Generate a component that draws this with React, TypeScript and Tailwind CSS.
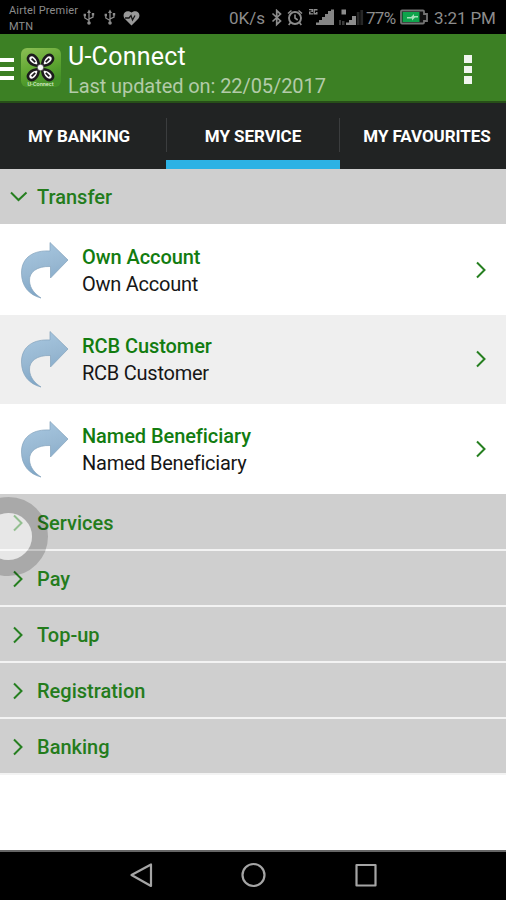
import React from "react";

const FONT = "font-['Roboto','Liberation_Sans',sans-serif]";

function Usb() {
  return (
    <svg className="block h-[17px] w-[12px]" viewBox="0 0 12 17" fill="none" stroke="#8c8c8c" strokeWidth="1.3">
      <path d="M6 3v10M6 11.5L1.8 9V6M6 10l4-2V5.5" />
      <path d="M6 .5L4 4h4z" fill="#8c8c8c" stroke="none" />
      <circle cx="6" cy="14" r="1.8" fill="#8c8c8c" stroke="none" />
      <path d="M.6 4.8H3v2.4H.6zM8.8 4h2.4v2.4H8.8z" fill="#8c8c8c" stroke="none" />
    </svg>
  );
}

function StatusBar() {
  return (
    <div className="flex h-[34px] shrink-0 items-start bg-black text-[#8c8c8c]">
      <div className="ml-[9px] mt-[3px] w-[74px] whitespace-nowrap text-[11px] leading-[15.5px] tracking-[0.15px]">
        <div>Airtel Premier</div>
        <div>MTN</div>
      </div>
      <div className="mt-[9px] flex items-start">
        <Usb />
        <div className="ml-[9px]"><Usb /></div>
        <svg className="ml-[7px] mt-px block h-[16px] w-[17px]" viewBox="0 0 17 16">
          <path d="M8.5 15.5L2 9C-2 4.500 3-1.500 8.500 2.600 14-1.500 19 4.500 15 9z" fill="#999" />
          <path d="M2 8h4l2-2.500L9.500 10 12 5.500" fill="none" stroke="#151515" strokeWidth="1.300" />
        </svg>
      </div>
      <span className="ml-[89px] mt-[8px] w-[41px] whitespace-nowrap text-[17px] leading-[20px]">0K/s</span>
      <svg className="mt-[9px] block h-[18px] w-[97px] shrink-0" viewBox="269 9 97 18" fill="none" stroke="#8c8c8c">
        <path d="M271.500 13.500L279.500 21 275.700 24.500V10.500L279.500 14 271.500 21.500" strokeWidth="1.700" />
        <circle cx="294" cy="18" r="6" strokeWidth="1.900" />
        <path d="M294 14.500V18l2.700 2M287 13.500l3.500-3M297.500 10.500l3.500 3M289.500 22.500L287.700 25M298.500 22.500l1.800 2.500" strokeWidth="1.600" />
        <g fill="#8c8c8c" stroke="none">
          <path d="M308 9h4v3h-2.500v1.200h2.500v1.300h-4v-3h2.500v-1.200h-2.500zM312.500 9h4v1.400h-2.600V13h1v-1h1.600v2.500h-4z" />
          <path d="M315 25v-2.500h3V20h3v-3h3v-3h3v-3h3V9.500h3V25z" fill="#858585" />
          <path d="M340.500 9.500h4.500v5h-4.500zM345 25v-2.500h3V20h3v-4h4v9z" />
          <path d="M338 20h2v5h-2zM341 21h2.500v4H341z" fill="#3a3a3a" />
          <path d="M355.800 12h2.700v13h-2.700zM359.400 10h2.700v15h-2.700z" fill="#262626" />
        </g>
      </svg>
      <span className="-ml-[1px] mt-[8px] w-[34px] whitespace-nowrap text-[17px] leading-[20px] tracking-[-0.7px]">77%</span>
      <svg className="-ml-px mt-[9px] block h-[17px] w-[31px] shrink-0" viewBox="399 9 31 17">
        <path d="M402 10.500h21q1 0 1 1V14h3v7h-3v1.500q0 1-1 1h-21q-1 0-1-1v-11q0-1 1-1z" fill="#111" stroke="#747474" strokeWidth="1.800" />
        <path d="M402.500 12h17v10h-17z" fill="#0fa44c" />
        <path d="M407 17h4l3-3v2h4v1.500h-3l-3 3V18.500h-5z" fill="#a5dfb9" />
      </svg>
      <span className="ml-[4px] mt-[8px] whitespace-nowrap text-[17px] leading-[20px] tracking-[-0.1px]">3:21 PM</span>
    </div>
  );
}

function Logo() {
  return (
    <svg className="block h-[42px] w-[42px] shrink-0" viewBox="0 0 42 42">
      <defs>
        <linearGradient id="logo" x1="0" y1="0" x2="0.4" y2="1">
          <stop offset="0" stopColor="#8cbf55" />
          <stop offset="0.600" stopColor="#5fa631" />
          <stop offset="1" stopColor="#439127" />
        </linearGradient>
      </defs>
      <rect x="1" y="1" width="40" height="39" rx="6" fill="url(#logo)" />
      <g fill="#f8f8f8" stroke="#1b1a1c" strokeWidth="2.600">
        {[45, 135, 225, 315].map((a) => (
          <g key={a} transform={`rotate(${a} 20.500 20.500)`}>
            <path d="M20.500 18C14.800 12.500 15.500 4.800 20.500 4.200 25.500 4.800 26.200 12.500 20.500 18z" />
            <path d="M20.500 8v5" strokeWidth="1.800" />
          </g>
        ))}
      </g>
      <circle cx="20.500" cy="20.500" r="3.200" fill="#f8f8f8" stroke="#1b1a1c" strokeWidth="0.600" />
      <text x="20.500" y="39" textAnchor="middle" fontSize="5.500" fontFamily="Roboto" fontWeight="500" fill="#d9edca" textLength="26">U-Connect</text>
    </svg>
  );
}

function Header() {
  return (
    <div className="flex h-[69px] shrink-0 items-start border-b-2 border-[#274f18] bg-[#3c8024]">
      <div className="mt-[24px] flex w-[14px] flex-col gap-[5px]">
        <div className="h-1 bg-white" />
        <div className="h-1 bg-white" />
        <div className="h-1 bg-white" />
      </div>
      <div className="ml-[6px] mt-[13px]"><Logo /></div>
      <div className="ml-[6px] mt-[8px] flex-1 whitespace-nowrap">
        <div className="text-[25px] leading-[29px] tracking-[0.25px] text-white">U-Connect</div>
        <div className="text-[20px] leading-[30px] tracking-[-0.08px] text-[#b3cba9]">Last updated on: 22/05/2017</div>
      </div>
      <div className="mr-[34px] mt-[21px] flex flex-col gap-[3px]">
        <div className="h-[7.500px] w-[8px] bg-[#f0f5ee]" />
        <div className="h-[7.500px] w-[8px] bg-[#f0f5ee]" />
        <div className="h-[7.500px] w-[8px] bg-[#f0f5ee]" />
      </div>
    </div>
  );
}

function Tabs() {
  return (
    <div className="flex h-[66px] shrink-0 overflow-hidden bg-[#212323]">
      <div className="-ml-[8px] w-[174px] shrink-0 pt-[23px] text-center text-[17px] font-bold leading-[20px] tracking-[-0.100px] text-white">MY BANKING</div>
      <div className="flex w-[174px] shrink-0 flex-col text-center text-[17px] font-bold leading-[20px] tracking-[-0.050px] text-white">
        <div className="mt-[15px] h-[34px] border-x border-[#3b3d3e] pt-[8px]">MY SERVICE</div>
        <div className="mt-auto h-[9px] bg-[#2cb2e4]" />
      </div>
      <div className="w-[174px] shrink-0 pt-[23px] text-center text-[17px] font-bold leading-[20px] tracking-[-0.050px] text-white">MY FAVOURITES</div>
    </div>
  );
}

function Chevron() {
  return (
    <svg className="block h-[18px] w-[12px]" viewBox="0 0 12 18" fill="none" stroke="#267f20" strokeWidth="2">
      <path d="M2 1.500L9.500 9 2 16.500" />
    </svg>
  );
}

function Section({ label, first = false }: { label: string; first?: boolean }) {
  return (
    <div className={`flex shrink-0 items-center border-b-2 border-[#f3f3f3] bg-[#cfcfcf] pt-[2px] ${first ? "h-[57px]" : "h-[56px]"}`}>
      <div className="ml-[12px] w-[25px]"><Chevron /></div>
      <span className="text-[20px] font-medium leading-[24px] text-[#247c1c]">{label}</span>
    </div>
  );
}

function Row({ label, className }: { label: string; className: string }) {
  return (
    <div className={`flex shrink-0 items-start ${className}`}>
      <svg className="ml-[20px] block h-[58px] w-[50px] shrink-0" viewBox="20 241 50 58">
        <defs>
          <linearGradient id="arrow" x1="0" y1="0" x2="0.300" y2="1">
            <stop offset="0" stopColor="#a9c9e2" />
            <stop offset="0.550" stopColor="#98b8d2" />
            <stop offset="1" stopColor="#7ea5c6" />
          </linearGradient>
        </defs>
        <path d="M50 242.500L68 260 50.500 278V266.500C37 266 29 272 29.500 281 30 289 35 294 41 298 29 295 21.500 286 21.500 273 21.500 257 34 250 50 251z" fill="url(#arrow)" stroke="#82a2bb" strokeWidth="0.700" />
      </svg>
      <div className="ml-[12px] mt-[3px] flex-1 whitespace-nowrap text-[20px] leading-[26.500px]">
        <div className="font-medium tracking-[-0.070px] text-[#127c10]">{label}</div>
        <div className="tracking-[-0.250px] text-[#161616]">{label}</div>
      </div>
      <div className="mr-[19px] mt-[20px]"><Chevron /></div>
    </div>
  );
}

export default function App() {
  return (
    <div className={`relative flex h-[900px] w-[506px] flex-col overflow-hidden bg-white ${FONT}`}>
      <StatusBar />
      <Header />
      <Tabs />
      <div className="flex h-[55px] shrink-0 items-center bg-[#cfcfcf] pt-[1px]">
        <svg className="ml-[10px] block h-[12px] w-[27px]" viewBox="0 0 27 12" fill="none" stroke="#267f20" strokeWidth="2">
          <path d="M1 1.500L8.500 9 16.500 1.500" />
        </svg>
        <span className="text-[20px] font-medium leading-[24px] text-[#247c1c]">Transfer</span>
      </div>
      <Row label="Own Account" className="h-[91px] bg-white pt-[17px]" />
      <Row label="RCB Customer" className="h-[89px] bg-[#efefef] pt-[15px]" />
      <Row label="Named Beneficiary" className="h-[90px] bg-white pt-[16px]" />
      <Section label="Services" first />
      <Section label="Pay" />
      <Section label="Top-up" />
      <Section label="Registration" />
      <Section label="Banking" />
      <div className="mt-auto flex h-[50px] shrink-0 justify-center border-t-2 border-[#666] bg-black">
        <svg className="block h-[48px] w-[260px]" viewBox="123 852 260 48" fill="none" stroke="#a5a5a5" strokeWidth="2.200" strokeLinejoin="round">
          <path d="M131.500 875L151 864.500V886z" />
          <circle cx="253.500" cy="875" r="11" />
          <path d="M356.500 865h19v20.500h-19z" />
        </svg>
      </div>
      <div className="absolute -left-[31px] top-[497px] h-[79px] w-[79px] rounded-full border-[16px] border-black/18">
        <div className="h-full w-full rounded-full bg-white/50" />
      </div>
    </div>
  );
}
